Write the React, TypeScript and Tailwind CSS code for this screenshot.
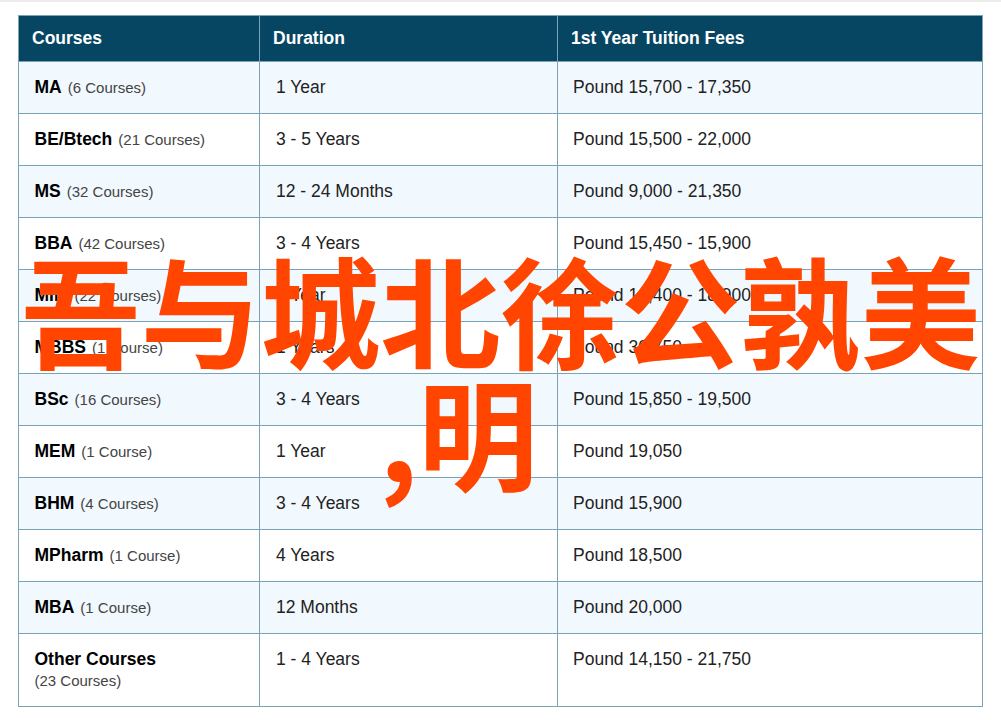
import React from 'react';

interface Course {
  name: string;
  count: string;
  duration: string;
  fees: string;
}

const courses: Course[] = [
  { name: 'MA', count: '(6 Courses)', duration: '1 Year', fees: 'Pound 15,700 - 17,350' },
  { name: 'BE/Btech', count: '(21 Courses)', duration: '3 - 5 Years', fees: 'Pound 15,500 - 22,000' },
  { name: 'MS', count: '(32 Courses)', duration: '12 - 24 Months', fees: 'Pound 9,000 - 21,350' },
  { name: 'BBA', count: '(42 Courses)', duration: '3 - 4 Years', fees: 'Pound 15,450 - 15,900' },
  { name: 'MIM', count: '(22 Courses)', duration: '1 Year', fees: 'Pound 14,400 - 18,900' },
  { name: 'MBBS', count: '(1 Course)', duration: '1 Years', fees: 'Pound 30,750' },
  { name: 'BSc', count: '(16 Courses)', duration: '3 - 4 Years', fees: 'Pound 15,850 - 19,500' },
  { name: 'MEM', count: '(1 Course)', duration: '1 Year', fees: 'Pound 19,050' },
  { name: 'BHM', count: '(4 Courses)', duration: '3 - 4 Years', fees: 'Pound 15,900' },
  { name: 'MPharm', count: '(1 Course)', duration: '4 Years', fees: 'Pound 18,500' },
  { name: 'MBA', count: '(1 Course)', duration: '12 Months', fees: 'Pound 20,000' },
];

export default function App() {
  return (
    <div className="relative h-[720px] w-[1001px] overflow-hidden bg-white font-['Liberation_Sans',Arial,sans-serif]">
      <div className="h-[2px] bg-[#ececec]" />
      <div className="pl-[18px] pt-[13px]">
        <div className="grid w-[965px] grid-cols-[241px_298px_1fr] border border-[#7ba3b8]">
          <div className="flex h-[45px] items-center border-r border-[#7ba3b8] bg-[#064663] pl-[13px] text-[17.5px] font-bold text-white">Courses</div>
          <div className="flex h-[45px] items-center border-r border-[#7ba3b8] bg-[#064663] pl-[13px] text-[17.5px] font-bold text-white">Duration</div>
          <div className="flex h-[45px] items-center bg-[#064663] pl-[13px] text-[17.5px] font-bold text-white">1st Year Tuition Fees</div>
          {courses.map((c, i) => (
            <React.Fragment key={c.name}>
              <div className={`flex h-[52px] items-center gap-[6px] border-r border-t border-[#7ba3b8] pl-[15.5px] ${i % 2 === 0 ? 'bg-[#f2f9fe]' : 'bg-white'}`}>
                <span className="text-[17.5px] font-bold text-black">{c.name}</span>
                <span className="pt-[2px] text-[15px] text-[#444]">{c.count}</span>
              </div>
              <div className={`flex h-[52px] items-center border-r border-t border-[#7ba3b8] pl-[16px] text-[17.5px] text-[#222] ${i % 2 === 0 ? 'bg-[#f2f9fe]' : 'bg-white'}`}>{c.duration}</div>
              <div className={`flex h-[52px] items-center border-t border-[#7ba3b8] pl-[15px] text-[17.5px] text-[#222] ${i % 2 === 0 ? 'bg-[#f2f9fe]' : 'bg-white'}`}>{c.fees}</div>
            </React.Fragment>
          ))}
          <div className="h-[73px] border-r border-t border-[#7ba3b8] pl-[15.5px] pt-[14px]">
            <div className="text-[17.5px] leading-[22px] font-bold text-black">Other Courses</div>
            <div className="text-[15px] leading-[22px] text-[#444]">(23 Courses)</div>
          </div>
          <div className="h-[73px] border-r border-t border-[#7ba3b8] pl-[16px] pt-[14px] text-[17.5px] leading-[22px] text-[#222]">1 - 4 Years</div>
          <div className="h-[73px] border-t border-[#7ba3b8] pl-[15px] pt-[14px] text-[17.5px] leading-[22px] text-[#222]">Pound 14,150 - 21,750</div>
        </div>
      </div>
      <div className="absolute left-0 top-[247px] w-[1001px] whitespace-nowrap text-center font-['Noto_Sans_CJK_SC',sans-serif] text-[120px] leading-[122px] font-bold text-[#ff4500]">
        <div>吾与城北徐公孰美</div>
        <div className="pr-[84px]">,明</div>
      </div>
    </div>
  );
}
